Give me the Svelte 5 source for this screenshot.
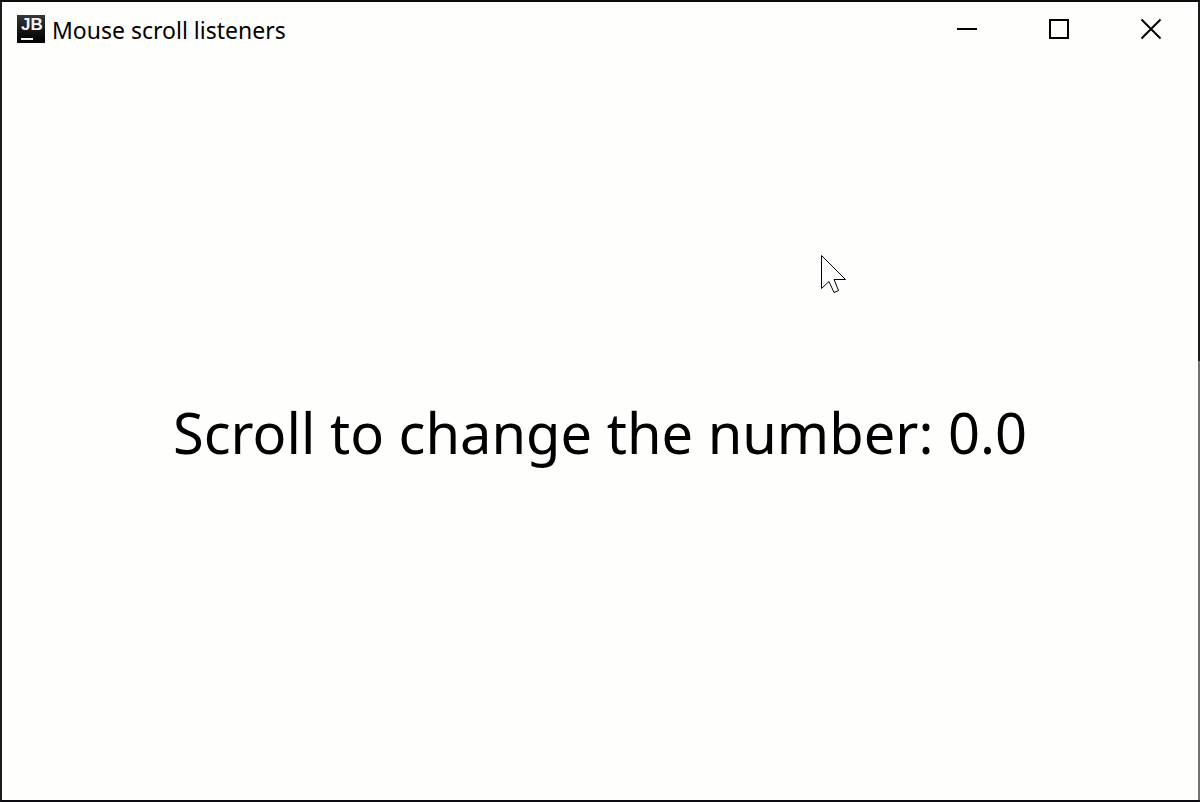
<script>
  let number = $state(0);

  function onwheel(event) {
    number += Math.sign(event.deltaY);
  }
</script>

<div class="window">
  <header class="titlebar">
    <span class="logo">JB</span>
    <span class="title">Mouse scroll listeners</span>
    <div class="controls">
      <button type="button" aria-label="Minimize">
        <svg width="22" height="22" viewBox="0 0 22 22"><path d="M1 11H21" /></svg>
      </button>
      <button type="button" aria-label="Maximize">
        <svg width="22" height="22" viewBox="0 0 22 22"><path d="M2 2H20V20H2Z" /></svg>
      </button>
      <button type="button" aria-label="Close">
        <svg width="22" height="22" viewBox="0 0 22 22"><path d="M1.500 1.500L20.500 20.500M20.500 1.500L1.500 20.500" /></svg>
      </button>
    </div>
  </header>
  <main {onwheel}>
    <p>Scroll to change the number: {number.toFixed(1)}</p>
  </main>
  <svg class="pointer" width="30" height="44" viewBox="0 0 30 44" aria-hidden="true">
    <path d="M5.500 5.500V38.500L13 31.500L18 42.500L22.500 40.500L18 29.500H29.500Z" />
  </svg>
</div>

<style>
  :global(body) {
    margin: 0;
    background: #1c1c1e;
  }

  .window {
    position: relative;
    box-sizing: border-box;
    min-height: 100vh;
    display: flex;
    flex-direction: column;
    border: 2px solid #1c1c1e;
    border-top-color: #0c0c0e;
    border-bottom-color: #0c0c12;
    background: #fefefc;
    color: #000;
    font-family: "Noto Sans", "Open Sans", sans-serif;
  }

  .window::after {
    content: "";
    position: absolute;
    top: 45%;
    right: -2px;
    bottom: 0;
    width: 2px;
    background: #707274;
  }

  .titlebar {
    display: flex;
    align-items: center;
    height: 54px;
    padding: 0 1px 0 15px;
  }

  .logo {
    flex: none;
    display: flex;
    flex-direction: column;
    gap: 3px;
    box-sizing: border-box;
    width: 28px;
    height: 28px;
    padding-left: 4px;
    background: linear-gradient(#383838, #151515 55%, #000);
    color: #f4f4f4;
    font-family: "Liberation Sans", Arial, sans-serif;
    font-size: 17px;
    font-weight: 700;
    line-height: 20px;
  }

  .logo::after {
    content: "";
    width: 12px;
    height: 2px;
    background: #f4f4f4;
  }

  .title {
    flex: 1;
    padding: 2px 0 0 7px;
    font-size: 23px;
    line-height: 30px;
    white-space: nowrap;
  }

  .controls {
    display: flex;
    height: 100%;
  }

  button {
    display: flex;
    align-items: center;
    justify-content: center;
    width: 92px;
    padding: 0;
    border: 0;
    background: transparent;
  }

  button path {
    fill: none;
    stroke: #000;
    stroke-width: 2;
  }

  main {
    flex: 1;
    display: flex;
    align-items: center;
    justify-content: center;
    padding-top: 8px;
  }

  p {
    margin: 0;
    font-size: 56px;
    line-height: 80px;
    text-align: center;
  }

  .pointer {
    position: absolute;
    top: 248px;
    left: 814px;
    pointer-events: none;
  }

  .pointer path {
    fill: #fff;
    stroke: #000;
    stroke-width: 1;
  }
</style>
